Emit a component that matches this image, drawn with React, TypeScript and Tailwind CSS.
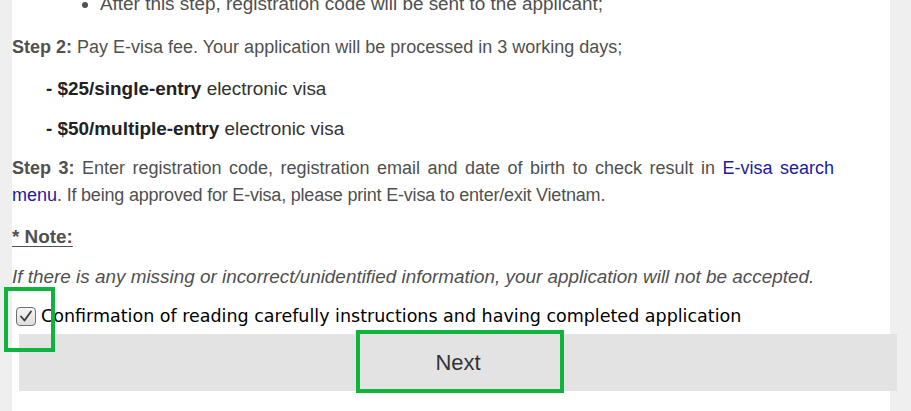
import React from "react"

function CheckedBox() {
  return (
    <svg width="20" height="19" viewBox="0 0 20 19" className="shrink-0">
      <defs>
        <linearGradient id="cbg" x1="0" y1="0" x2="0" y2="1">
          <stop offset="0" stopColor="#f6f6f6" />
          <stop offset="1" stopColor="#dcdcdc" />
        </linearGradient>
      </defs>
      <rect x="0.5" y="0.5" width="19" height="18" rx="3.5" fill="url(#cbg)" stroke="#6f6f6f" />
      <path d="M5 9.5 L8.5 13.5 L15 4.5" fill="none" stroke="#3a3a3a" strokeWidth="1.8" strokeLinecap="round" strokeLinejoin="round" />
    </svg>
  )
}

export default function App() {
  return (
    <div className="h-[411px] w-[911px] overflow-hidden bg-[#efefef] font-['Liberation_Sans',Arial,sans-serif] text-[18px] leading-[27px] text-[#505050]">
      <div className="relative ml-[12px] flow-root h-full w-[878px] bg-white pr-[30px]">
        <ul className="mt-[-10px] list-disc pl-[88px] text-[18.9px]">
          <li>After this step, registration code will be sent to the applicant;</li>
        </ul>

        <p className="mt-[17px]">
          <b>Step 2:</b> Pay E-visa fee. Your application will be processed in 3 working days;
        </p>
        <p className="mt-[14px] pl-[34px] text-[18.9px]">
          <b className="text-[#222]">- $25/single-entry</b> <span className="text-[#333]">electronic visa</span>
        </p>
        <p className="mt-[13px] pl-[34px] text-[18.9px]">
          <b className="text-[#222]">- $50/multiple-entry</b> <span className="text-[#333]">electronic visa</span>
        </p>
        <p className="mt-[13px] pr-[26px] text-justify">
          <b>Step 3:</b> Enter registration code, registration email and date of birth to check result in{" "}
          <a className="text-[#1c1c9c]">E-visa search menu</a>
          <span className="tracking-[-0.2px]">. If being approved for E-visa, please print E-visa to enter/exit Vietnam.</span>
        </p>
        <p className="mt-[14px] text-[18.9px]">
          <b className="underline underline-offset-[3px]">* Note:</b>
        </p>
        <p className="mt-[13px] text-[18.9px] italic">
          If there is any missing or incorrect/unidentified information, your application will not be accepted.
        </p>

        <label className="mt-[14px] flex h-[24px] items-center gap-[5px] pl-[4px] font-['DejaVu_Sans',Verdana,sans-serif] text-[17.5px] text-black">
          <CheckedBox />
          <span className="whitespace-nowrap">Confirmation of reading carefully instructions and having completed application</span>
        </label>

        <div className="relative ml-[7px] mr-[-37px] mt-[6px] flex h-[57px] items-center justify-center bg-[#e3e3e3]">
          <button className="font-['Liberation_Sans',Arial,sans-serif] text-[22px] text-[#333]">Next</button>
          <div className="absolute left-[337px] top-[-4px] h-[63px] w-[208px] border-4 border-[#10b43c]" />
        </div>

        <div className="absolute left-[-8px] top-[287px] h-[65px] w-[51px] border-4 border-[#10b43c]" />
      </div>
    </div>
  )
}
